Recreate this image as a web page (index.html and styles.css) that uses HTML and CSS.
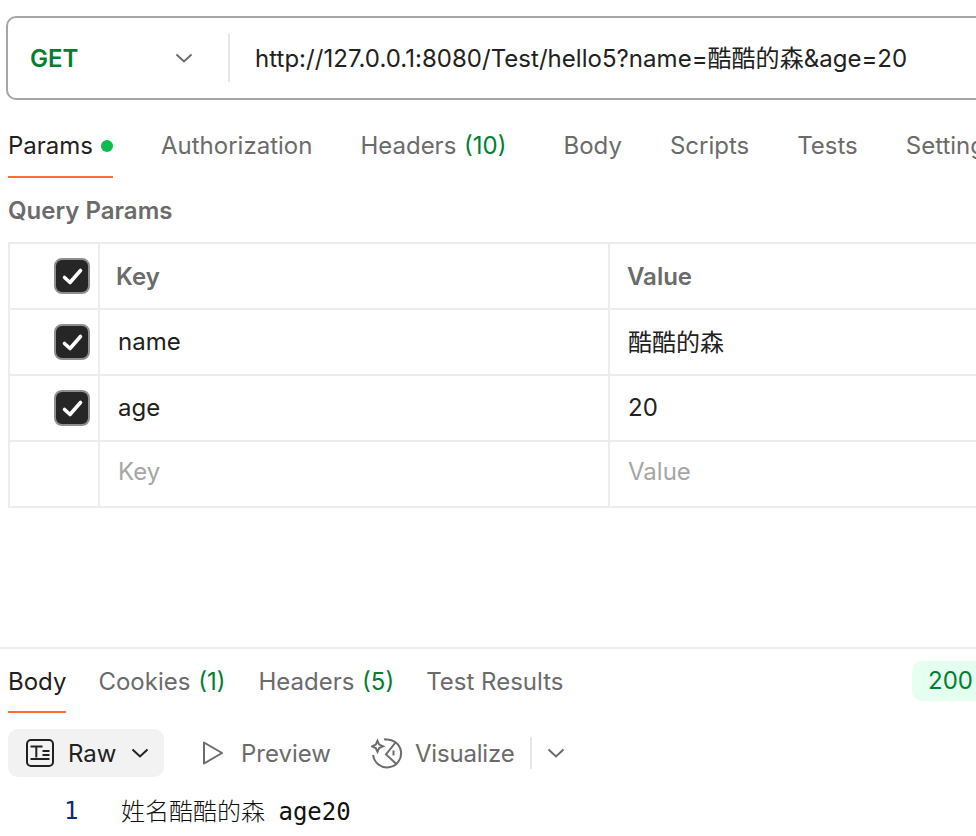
FILE: index.html
```html
<!DOCTYPE html>
<html lang="zh">
<head>
<meta charset="utf-8">
<title>Request</title>
<link rel="stylesheet" href="styles.css">
</head>
<body>
<div class="page">
  <div class="urlbar">
    <div class="method"><span class="get">GET</span>
      <svg class="chev" width="18" height="10" viewBox="0 0 18 10"><path d="M1.500 1.500 9 8.500l7.500-7" fill="none" stroke="#6b6b6b" stroke-width="2"/></svg>
    </div>
    <div class="vsep"></div>
    <div class="url">http://127.0.0.1:8080/Test/hello5?name=酷酷的森&amp;age=20</div>
  </div>

  <nav class="tabs reqtabs">
    <div class="tab active">Params<i class="dot"></i></div>
    <div class="tab">Authorization</div>
    <div class="tab">Headers <span class="count">(10)</span></div>
    <div class="tab t-body">Body</div>
    <div class="tab">Scripts</div>
    <div class="tab">Tests</div>
    <div class="tab">Settings</div>
  </nav>

  <div class="qp">Query Params</div>

  <div class="table">
    <div class="row">
      <div class="c0"><span class="cb"><svg width="24" height="24" viewBox="0 0 24 24"><path d="M4.500 13.500l5.500 5L20.500 6.500" fill="none" stroke="#fff" stroke-width="3.600" stroke-linecap="round" stroke-linejoin="round"/></svg></span></div>
      <div class="c1 head">Key</div>
      <div class="c2 head">Value</div>
    </div>
    <div class="row">
      <div class="c0"><span class="cb"><svg width="24" height="24" viewBox="0 0 24 24"><path d="M4.500 13.500l5.500 5L20.500 6.500" fill="none" stroke="#fff" stroke-width="3.600" stroke-linecap="round" stroke-linejoin="round"/></svg></span></div>
      <div class="c1 val">name</div>
      <div class="c2 val cn">酷酷的森</div>
    </div>
    <div class="row">
      <div class="c0"><span class="cb"><svg width="24" height="24" viewBox="0 0 24 24"><path d="M4.500 13.500l5.500 5L20.500 6.500" fill="none" stroke="#fff" stroke-width="3.600" stroke-linecap="round" stroke-linejoin="round"/></svg></span></div>
      <div class="c1 val">age</div>
      <div class="c2 val">20</div>
    </div>
    <div class="row">
      <div class="c0"></div>
      <div class="c1 val ph">Key</div>
      <div class="c2 val ph">Value</div>
    </div>
  </div>

  <div class="response">
    <nav class="tabs restabs">
      <div class="tab active">Body</div>
      <div class="tab t-cook">Cookies <span class="count">(1)</span></div>
      <div class="tab">Headers <span class="count">(5)</span></div>
      <div class="tab t-res">Test Results</div>
      <div class="status">200 OK</div>
    </nav>
    <div class="toolbar">
      <div class="raw">
        <svg width="28" height="28" viewBox="0 0 28 28" fill="none" stroke="#212121" stroke-width="2"><rect x="1" y="1" width="26" height="26" rx="4"/><path d="M4.500 7.500h12M10.300 7.500v11M4.500 20h19M16.500 12h7M16.500 16h7"/></svg>
        <span>Raw</span>
        <svg width="18" height="10" viewBox="0 0 18 10"><path d="M1.500 1.500 9 8.500l7.500-7" fill="none" stroke="#212121" stroke-width="2"/></svg>
      </div>
      <div class="opt opt-prev">
        <svg width="22" height="24" viewBox="0 0 22 24"><path d="M2 1.500 20 12 2 22.500Z" fill="none" stroke="#6b6b6b" stroke-width="2" stroke-linejoin="round"/></svg>
        <span>Preview</span>
      </div>
      <div class="opt opt-vis">
        <svg width="32" height="32" viewBox="0 0 32 32" fill="none" stroke="#6b6b6b" stroke-width="2"><path d="M14 2.600A14 14 0 1 1 2.200 18"/><path d="M6.500 3.800 8.200 7.600 12 9.300 8.200 11 6.500 14.800 4.800 11 1 9.300 4.800 7.600Z"/><path d="M13 1.500h1.800v1.800H13Z" fill="#6b6b6b" stroke="none"/><path d="M24.500 5.500 15 17.500 26 27.500"/><path d="M22.500 13.500v5"/></svg>
        <span>Visualize</span>
      </div>
      <div class="tsep"></div>
      <svg class="more" width="18" height="10" viewBox="0 0 18 10"><path d="M1.500 1.500 9 8.500l7.500-7" fill="none" stroke="#6b6b6b" stroke-width="2"/></svg>
    </div>
    <div class="code"><span class="ln">1</span><span class="src"><span class="cjk">姓名酷酷的森</span> age20</span></div>
  </div>
</div>
</body>
</html>
```
FILE: styles.css
```css
* { box-sizing: border-box; }
html, body { margin: 0; padding: 0; background: #fff; }
body { width: 976px; height: 836px; overflow: hidden; font-family: Inter, "Noto Sans CJK SC", sans-serif; font-size: 24px; color: #212121; }
.page { width: 976px; height: 836px; overflow: hidden; padding-top: 16px; }

.urlbar { margin-left: 6px; width: 1100px; height: 84px; border: 2px solid #a6a6a6; border-radius: 10px; display: flex; align-items: center; }
.method { width: 220px; padding-left: 22px; padding-right: 35px; display: flex; justify-content: space-between; align-items: center; }
.get { color: #007f31; font-weight: 600; }
.vsep { width: 2px; height: 48px; background: #e6e6e6; }
.url { margin-left: 25px; white-space: nowrap; letter-spacing: .03px; padding-bottom: 4px; }

.tabs { display: flex; align-items: flex-start; white-space: nowrap; }
.tab { color: #6b6b6b; line-height: 30px; }
.tab.active { color: #212121; box-shadow: inset 0 -2px 0 #ff6c37; }
.count { color: #007f31; margin-left: 1px; }
.reqtabs { margin: 31px 0 0 8px; height: 48px; }
.reqtabs .tab { height: 47px; }
.reqtabs .tab + .tab { margin-left: 48px; }
.reqtabs .active { display: flex; align-items: flex-start; }
.dot { width: 12px; height: 12px; border-radius: 50%; background: #0cbb52; margin: 9px 0 0 8px; }
.reqtabs .tab + .t-body { margin-left: 57px; }

.qp { margin: 17px 0 0 8px; font-weight: 600; font-size: 24px; color: #6b6b6b; line-height: 30px; }

.table { margin: 16px 0 0 8px; width: 1100px; border: 2px solid #ededed; border-bottom: 0; }
.row { display: grid; grid-template-columns: 90px 510px 1fr; height: 66px; border-bottom: 2px solid #ededed; }
.c0 { display: flex; align-items: center; justify-content: flex-end; padding-right: 8px; border-right: 2px solid #ededed; }
.c1 { border-right: 2px solid #ededed; }
.c1, .c2 { display: flex; align-items: center; padding-bottom: 2px; }
.c1.head { font-weight: 600; color: #6b6b6b; padding: 0 0 0 16px; }
.c2.head { font-weight: 600; color: #6b6b6b; padding: 0 0 0 17px; }
.val { padding-left: 18px; }
.c2.cn { padding-bottom: 4px; }
.c1.ph, .c2.ph { color: #a6a6a6; padding-bottom: 6px; }
.cb { width: 36px; height: 36px; border: 2px solid #8f8f8f; border-radius: 8px; background: #262626; display: flex; align-items: center; justify-content: center; }

.response { margin-top: 139px; border-top: 2px solid #ededed; }
.restabs { padding: 18px 0 0 8px; height: 64px; position: relative; }
.restabs .tab { height: 46px; }
.restabs .tab + .tab { margin-left: 33px; }
.restabs .tab + .t-cook { margin-left: 32px; }
.restabs .tab + .t-res { margin-left: 32px; }
.status { position: absolute; left: 912px; top: 12px; width: 100px; height: 40px; border-radius: 10px; background: #e5fff1; color: #007f31; padding-left: 16px; line-height: 40px; }

.toolbar { display: flex; align-items: center; height: 48px; margin: 16px 0 0 8px; }
.raw { width: 156px; height: 48px; background: #f2f2f2; border-radius: 10px; display: flex; align-items: center; padding-left: 18px; }
.raw span { margin: 0 15px 0 14px; }
.opt { display: flex; align-items: center; color: #6b6b6b; }
.opt-prev { margin-left: 38px; }
.opt-prev span { margin-left: 17px; }
.opt-vis { margin-left: 40px; }
.opt-vis span { margin-left: 12px; letter-spacing: -.2px; }
.tsep { width: 2px; height: 32px; background: #e6e6e6; margin: 0 15px 0 16px; }

.code { display: flex; align-items: center; margin-top: 16px; font-family: "DejaVu Sans Mono", "Noto Sans CJK SC", monospace; font-size: 24px; line-height: 34px; }
.ln { color: #0b2a78; margin-left: 64px; width: 57px; }
.src { color: #111; white-space: pre; }
.cjk { font-weight: 300; font-family: "Noto Sans CJK SC", sans-serif; margin-right: -1px; }
```
